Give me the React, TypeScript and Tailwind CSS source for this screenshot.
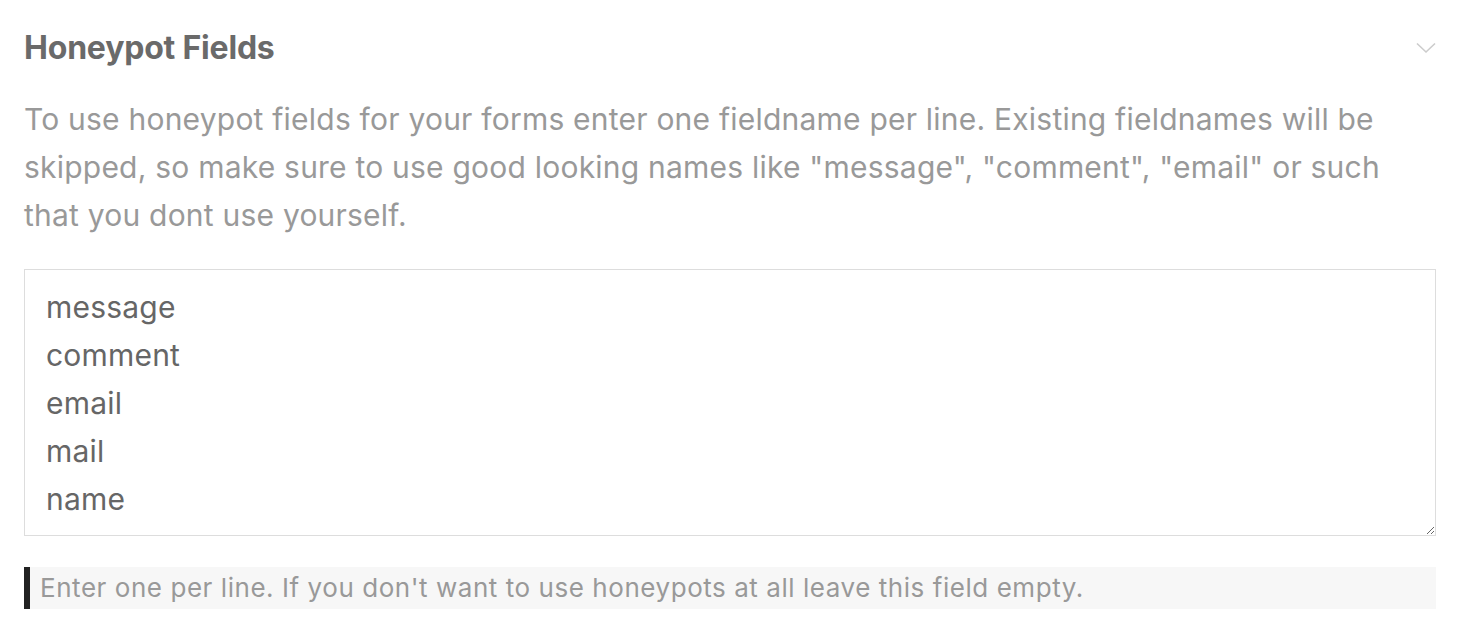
import React from "react";

export default function App() {
  const value = "message\ncomment\nemail\nmail\nname";
  return (
    <div className="w-[1466px] h-[632px] bg-white overflow-hidden" style={{ fontFamily: "Inter, 'Noto Sans', sans-serif" }}>
      <div className="pl-[24px] pr-[30px] pt-[30px]">
        <div className="flex items-center justify-between h-[36px]">
          <h2 className="text-[32px] leading-[36px] font-bold text-[#6a6a6a] tracking-[-0.2px]">Honeypot Fields</h2>
          <svg width="20" height="12" viewBox="0 0 20 12">
            <path d="M1 1.5 L10 10 L19 1.5" fill="none" stroke="#cccccc" strokeWidth="1.6" />
          </svg>
        </div>
        <p className="mt-[29px] text-[30px] leading-[48px] tracking-[0.22px] text-[#999999]">
          To use honeypot fields for your forms enter one fieldname per line. Existing fieldnames will be skipped, so make sure to use good looking names like "message", "comment", "email" or such that you dont use yourself.
        </p>
        <textarea
          className="mt-[30px] block w-[1412px] h-[267px] border border-[#dddddd] pl-[21px] pr-[10px] pt-[13px] pb-[11px] text-[30px] leading-[48px] tracking-[0.2px] text-[#666666] outline-none resize-y"
          style={{ fontFamily: "Inter, 'Noto Sans', sans-serif" }}
          defaultValue={value}
        />
        <div className="mt-[31px] w-[1412px] h-[42px] bg-[#f7f7f7] border-l-[6px] border-[#222222] pl-[10px] flex items-center">
          <span className="text-[26px] leading-[42px] tracking-[0.55px] text-[#999999]">
            Enter one per line. If you don't want to use honeypots at all leave this field empty.
          </span>
        </div>
      </div>
    </div>
  );
}
